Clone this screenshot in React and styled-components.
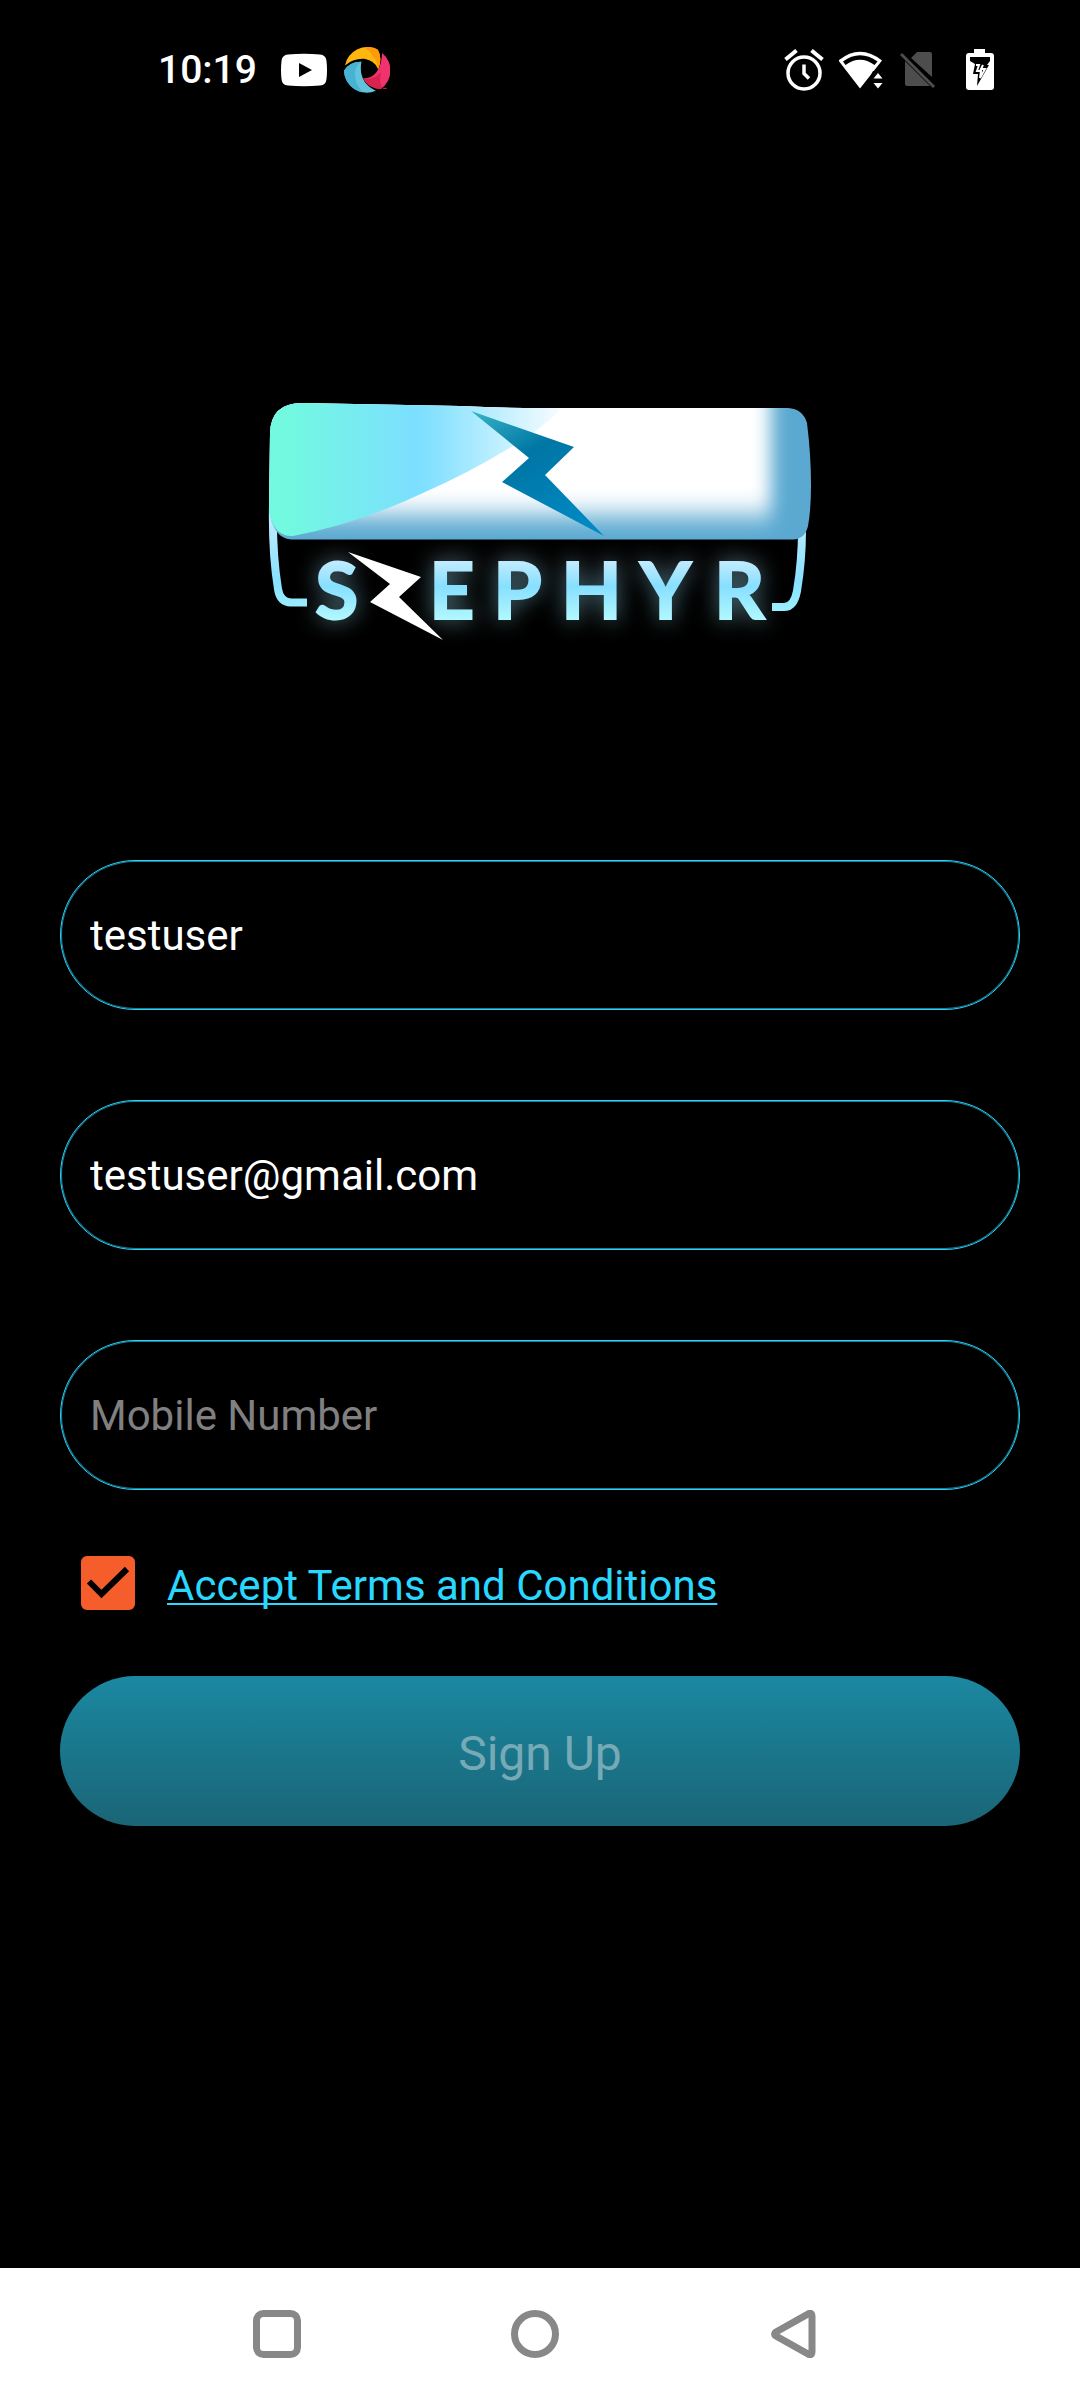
import React, { useState } from "react";
import styled, { createGlobalStyle } from "styled-components";

const GlobalStyle = createGlobalStyle`
  *, *::before, *::after { box-sizing: border-box; }
  body { margin: 0; background: #000; font-family: Roboto, "Noto Sans", sans-serif; }
`;

const Screen = styled.div`
  display: flex;
  flex-direction: column;
  min-height: 100vh;
  background: #000;
  color: #fff;
`;

const StatusBar = styled.header`
  display: flex;
  align-items: center;
  justify-content: space-between;
  height: 140px;
  padding: 0 86px 0 158px;
`;

const StatusGroup = styled.div`
  display: flex;
  align-items: center;
  gap: ${(p) => p.$gap}px;
`;

const Clock = styled.time`
  margin-right: 7px;
  font-size: 39px;
  font-weight: 500;
  line-height: 48px;
`;

const Icon = styled.svg`
  display: block;
  flex: none;
  width: ${(p) => p.$w}px;
  height: ${(p) => p.$h}px;
`;

const Content = styled.main`
  display: flex;
  flex: 1;
  flex-direction: column;
  padding: 254px 60px 60px;
`;

const Logo = styled.svg`
  display: block;
  align-self: center;
  width: 560px;
  max-width: 100%;
  margin-bottom: 206px;
`;

const Wordmark = styled.text`
  font-family: Lato, sans-serif;
  font-size: 79px;
  font-weight: 700;
`;

const Form = styled.form`
  display: flex;
  flex-direction: column;
`;

const Fields = styled.div`
  display: flex;
  flex-direction: column;
  gap: 90px;
`;

const Field = styled.input`
  width: 100%;
  height: 150px;
  padding: 0 29px;
  border: 1px solid #28d3fc;
  border-radius: 75px;
  outline: none;
  background: transparent;
  box-shadow: inset 0 0 0 1px rgba(40, 211, 252, 0.6);
  color: #fff;
  font: 400 42px Roboto, "Noto Sans", sans-serif;

  &::placeholder { color: #808080; opacity: 1; }
`;

const Terms = styled.div`
  display: flex;
  align-items: center;
  gap: 32px;
  margin: 66px 0;
  padding-left: 21px;
`;

const CheckSlot = styled.span`
  display: grid;
  width: 54px;
  height: 54px;

  & > * { grid-area: 1 / 1; }
  & > svg { pointer-events: none; }
`;

const CheckBox = styled.input`
  width: 54px;
  height: 54px;
  margin: 0;
  appearance: none;
  border: 5px solid #f55d2b;
  border-radius: 6px;

  &:checked { background: #f55d2b; }
`;

const TermsLabel = styled.label`
  padding-top: 6px;
  font-size: 42px;
  line-height: 48px;
`;

const TermsLink = styled.a`
  color: #28d8ff;
  text-decoration: underline;
  text-decoration-thickness: 2px;
  text-decoration-skip-ink: none;
  text-underline-offset: 3px;
`;

const SignUp = styled.button`
  width: 100%;
  height: 150px;
  padding: 4px 0 0;
  border: 0;
  border-radius: 75px;
  background: linear-gradient(#1b88a1, #1a6576);
  color: #76aab7;
  font: 400 48px Roboto, "Noto Sans", sans-serif;
`;

const NavBar = styled.nav`
  display: flex;
  align-items: center;
  justify-content: center;
  gap: 210px;
  height: 132px;
  padding-right: 11px;
  background: #fff;
`;

const NavButton = styled.button`
  padding: 0;
  border: 0;
  background: none;
`;

function SzephyrLogo() {
  return (
    <Logo viewBox="260 394 560 260" role="img" aria-label="Szephyr">
      <defs>
        <clipPath id="unit">
          <path d="M270 433Q271 403 302 403L460 406Q500 408 540 408H788Q803 409 807 423Q811 455 811 485Q811 510 808 526Q805 539 793 539.500H291Q273 538 269 510Z" />
        </clipPath>
        <linearGradient id="sweep" gradientUnits="userSpaceOnUse" x1="270" y1="0" x2="562" y2="0">
          <stop offset="0.06" stopColor="#72f9e0" />
          <stop offset="0.5" stopColor="#7cdfff" />
          <stop offset="0.56" stopColor="#86e1ff" />
          <stop offset="1" stopColor="#f8fdff" />
        </linearGradient>
        <linearGradient id="boltFill" gradientUnits="userSpaceOnUse" x1="480" y1="405" x2="560" y2="540">
          <stop offset="0" stopColor="#38b5c6" />
          <stop offset="0.42" stopColor="#0076a4" />
          <stop offset="1" stopColor="#0089c4" />
        </linearGradient>
        <linearGradient id="letters" gradientUnits="userSpaceOnUse" x1="0" y1="562" x2="0" y2="620">
          <stop offset="0" stopColor="#c0ebff" />
          <stop offset="0.42" stopColor="#87dfff" />
          <stop offset="1" stopColor="#b2f8ff" />
        </linearGradient>
        <linearGradient id="pipe" gradientUnits="userSpaceOnUse" x1="0" y1="510" x2="0" y2="612">
          <stop offset="0" stopColor="#c5eeff" />
          <stop offset="0.7" stopColor="#87e1ff" />
          <stop offset="1" stopColor="#9defff" />
        </linearGradient>
        <filter id="soft" x="-20%" y="-50%" width="140%" height="200%" colorInterpolationFilters="sRGB">
          <feGaussianBlur stdDeviation="9 13" />
        </filter>
        <filter id="glow" x="-20%" y="-60%" width="140%" height="220%" colorInterpolationFilters="sRGB">
          <feGaussianBlur in="SourceGraphic" stdDeviation="11" result="halo" />
          <feComponentTransfer in="halo" result="dim">
            <feFuncA type="linear" slope="0.5" />
          </feComponentTransfer>
          <feMerge>
            <feMergeNode in="dim" />
            <feMergeNode in="SourceGraphic" />
          </feMerge>
        </filter>
      </defs>
      <g fill="none" stroke="url(#pipe)" strokeWidth="8">
        <path d="M273 505Q272 552 278 589Q280 602 291 602.500H307" />
        <path d="M802 530Q802 561 797 591Q794 607 784 607H772" />
      </g>
      <g clipPath="url(#unit)">
        <rect x="260" y="394" width="560" height="150" fill="#5ba9d1" />
        <rect x="200" y="340" width="571" height="175" fill="#fff" filter="url(#soft)" />
        <path d="M260 394H575L562 408Q545 426 513 446Q467 474 423 493Q357 524 293 536Q272 537 268 506Z" fill="url(#sweep)" />
      </g>
      <path d="M471 411L574 447L545 475L604 536L502 482L529 458Z" fill="url(#boltFill)" />
      <g filter="url(#glow)">
        <Wordmark x="315 429 493 561 640 714" y="619" fill="url(#letters)" stroke="url(#letters)" strokeWidth="2">SEPHYR</Wordmark>
      </g>
      <path d="M348 552L421 577L399 597L443 640L370 602L390 584Z" fill="#fff" />
    </Logo>
  );
}

const VideoIcon = () => (
  <Icon $w={46} $h={34} viewBox="0 0 46 34" aria-hidden="true">
    <path fillRule="evenodd" fill="#fff" d="M7 1.500Q23 0 39 1.500Q45 2 45.500 8Q46.500 17 45.500 26Q45 32 39 32.500Q23 34 7 32.500Q1 32 .5 26Q-.5 17 .5 8Q1 2 7 1.500ZM18 10V24L31 17Z" />
  </Icon>
);

const SwirlIcon = () => (
  <Icon $w={46} $h={46} viewBox="0 0 140 140" aria-hidden="true">
    <path d="M3 56A69 69 0 0 1 103 8Q118 34 104 68Q95 42 62 36Q28 34 3 56Z" fill="#ffb60f" />
    <path d="M62 0Q92 -2 103 8Q118 34 104 68Q101 30 62 0Z" fill="#ff9a08" />
    <path d="M116 18A69 69 0 0 1 112 128Q77 128 58 96Q112 94 116 18Z" fill="#f0336c" />
    <path d="M58 96Q89 102 113 77Q105 112 118 123L112 128Q77 128 58 96Z" fill="#d9234f" />
    <path d="M0 72Q18 44 53 45Q42 108 97 133A69 69 0 0 1 0 72Z" fill="#62c3dc" />
    <path d="M0 72Q18 44 53 45Q26 64 35 98Q40 122 59 138A69 69 0 0 1 0 72Z" fill="#48b2d2" />
    <path d="M119 126H130" stroke="#d9234f" strokeWidth="3" />
  </Icon>
);

const AlarmIcon = () => (
  <Icon $w={40} $h={42} viewBox="0 0 40 42" aria-hidden="true">
    <g fill="none" stroke="#fff" strokeWidth="3.500">
      <circle cx="20" cy="24" r="16" />
      <path d="M20 15.500V24.500L25 29.500" />
      <path d="M1.500 10.500L12.500 1.500M38.500 10.500L27.500 1.500" strokeWidth="4" />
    </g>
  </Icon>
);

const WifiIcon = () => (
  <Icon $w={46} $h={38} viewBox="1 0 46 38" aria-hidden="true">
    <path fillRule="evenodd" fill="#fff" d="M0.500 9.500Q22 -8 44 9.500L22 37.500ZM5 10.500L7.500 14Q22 3.500 36.500 14L39.500 10.500Q22 -2 5 10.500Z" />
    <path d="M35 20H46V38H31V28Z" fill="#000" />
    <path d="M40 22L44.500 27.500H35.500ZM40 37.500L44.500 32H35.500Z" fill="#fff" />
  </Icon>
);

const NoSimIcon = () => (
  <Icon $w={36} $h={38} viewBox="0 0 36 38" aria-hidden="true">
    <path d="M11 7L17 1H30Q32 1 32 3V26ZM5 10L30 35H7Q5 35 5 33Z" fill="#4d4d4d" />
    <path d="M1 3L34 36" stroke="#4d4d4d" strokeWidth="3" />
  </Icon>
);

const BatteryIcon = () => (
  <Icon $w={28} $h={42} viewBox="0 0 28 42" aria-hidden="true">
    <path d="M8 0H19V4H25Q28 4 28 7V38Q28 41 25 41H3Q0 41 0 38V7Q0 4 3 4H8Z" fill="#fff" />
    <path d="M4 8H24V12L21 16H23L11 37L12 25H7L9 15L4 12Z" fill="#000" />
    <path d="M10 16H13L11 22H15L14 29L19 20H15L17 16" fill="none" stroke="#fff" strokeWidth="2" />
  </Icon>
);

const navItems = [
  { label: "Recent apps", shape: <rect x="3.500" y="3.500" width="41" height="41" rx="7" /> },
  { label: "Home", shape: <circle cx="24" cy="24" r="20.500" /> },
  { label: "Back", shape: <path d="M7 22L40 3.500Q43 2.500 43 6V42Q43 45.500 40 44.500L7 26Q4 24 7 22Z" /> },
];

export default function App() {
  const [name, setName] = useState("testuser");
  const [email, setEmail] = useState("testuser@gmail.com");
  const [mobile, setMobile] = useState("");
  const [accepted, setAccepted] = useState(true);

  return (
    <>
      <GlobalStyle />
      <Screen>
        <StatusBar>
          <StatusGroup $gap={17}>
            <Clock>10:19</Clock>
            <VideoIcon />
            <SwirlIcon />
          </StatusGroup>
          <StatusGroup $gap={15}>
            <AlarmIcon />
            <WifiIcon />
            <StatusGroup $gap={30}>
              <NoSimIcon />
              <BatteryIcon />
            </StatusGroup>
          </StatusGroup>
        </StatusBar>
        <Content>
          <SzephyrLogo />
          <Form onSubmit={(e) => e.preventDefault()}>
            <Fields>
              <Field type="text" aria-label="Username" value={name} onChange={(e) => setName(e.target.value)} />
              <Field type="email" aria-label="Email" value={email} onChange={(e) => setEmail(e.target.value)} />
              <Field type="tel" aria-label="Mobile Number" placeholder="Mobile Number" value={mobile} onChange={(e) => setMobile(e.target.value)} />
            </Fields>
            <Terms>
              <CheckSlot>
                <CheckBox id="terms" type="checkbox" checked={accepted} onChange={(e) => setAccepted(e.target.checked)} />
                {accepted && (
                  <Icon $w={54} $h={54} viewBox="0 0 54 54" aria-hidden="true">
                    <path d="M8 25.500L20.500 38L46 13" fill="none" stroke="#000" strokeWidth="6" />
                  </Icon>
                )}
              </CheckSlot>
              <TermsLabel htmlFor="terms">
                <TermsLink href="#terms">Accept Terms and Conditions</TermsLink>
              </TermsLabel>
            </Terms>
            <SignUp type="submit" disabled={!mobile}>Sign Up</SignUp>
          </Form>
        </Content>
        <NavBar>
          {navItems.map((item) => (
            <NavButton key={item.label} type="button" aria-label={item.label}>
              <Icon $w={48} $h={48} viewBox="0 0 48 48" fill="none" stroke="#888" strokeWidth="7">
                {item.shape}
              </Icon>
            </NavButton>
          ))}
        </NavBar>
      </Screen>
    </>
  );
}
